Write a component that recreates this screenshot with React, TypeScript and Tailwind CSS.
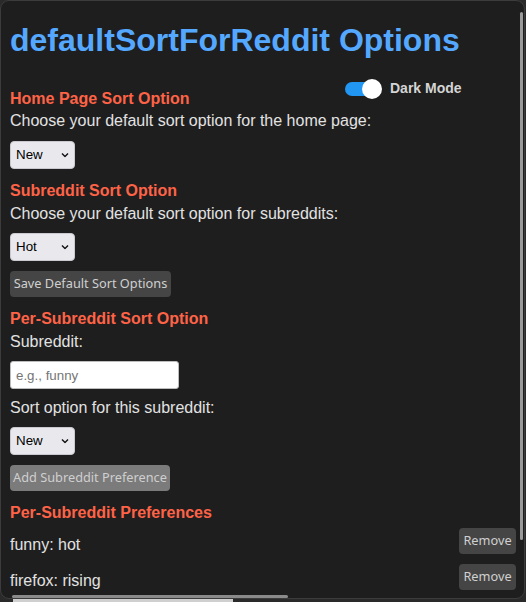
import React from "react";

const arial = { fontFamily: '"Liberation Sans", Arial, sans-serif' };

function Chevron() {
  return (
    <svg
      className="pointer-events-none absolute right-[6px] top-1/2 -translate-y-1/2"
      width="8"
      height="5"
      viewBox="0 0 8 5"
    >
      <path d="M1 1 L4 4 L7 1" fill="none" stroke="#111" strokeWidth="1.4" />
    </svg>
  );
}

function FakeSelect({ value }: { value: string }) {
  return (
    <div className="relative h-[28px] w-[65px]">
      <select
        defaultValue={value}
        className="h-[28px] w-[65px] appearance-none rounded-[4px] border border-[#c9c9cf] bg-[#e9e9ed] pl-[5px] text-[13.33px] text-black outline-none"
        style={arial}
      >
        <option>{value}</option>
      </select>
      <Chevron />
    </div>
  );
}

function H2({ children, mt }: { children: React.ReactNode; mt: string }) {
  return (
    <h2 className={`${mt} text-[16px] font-bold leading-[18px] text-[#ff6347]`}>{children}</h2>
  );
}

function P({ children, mt }: { children: React.ReactNode; mt: string }) {
  return <p className={`${mt} text-[16px] leading-[18px] text-[#e2e2e2]`}>{children}</p>;
}

const btnFont = { fontFamily: '"Noto Sans", "Open Sans", sans-serif' };

export default function App() {
  return (
    <div className="relative h-[602px] w-[526px] overflow-hidden bg-[#2a2a2a]" style={arial}>
      <div className="relative h-[599px] w-[525px] overflow-hidden rounded-[9px] border border-[#3c3c3c] bg-[#1e1e1e]">
        <div className="flex w-[515px] flex-col items-start pl-[9px] pt-[21px]">
          <h1 className="text-[32px] font-bold leading-[36px] text-[#55a8ff]">
            defaultSortForReddit Options
          </h1>

          <H2 mt="mt-[32px]">Home Page Sort Option</H2>
          <P mt="mt-[4px]">Choose your default sort option for the home page:</P>
          <div className="mt-[11px]">
            <FakeSelect value="New" />
          </div>

          <H2 mt="mt-[13px]">Subreddit Sort Option</H2>
          <P mt="mt-[5px]">Choose your default sort option for subreddits:</P>
          <div className="mt-[10px]">
            <FakeSelect value="Hot" />
          </div>
          <button
            className="mt-[10px] h-[26px] w-[161px] rounded-[4px] bg-[#454545] text-[12.75px] text-[#d0d0d0]"
            style={btnFont}
          >
            Save Default Sort Options
          </button>

          <H2 mt="mt-[13px]">Per-Subreddit Sort Option</H2>
          <P mt="mt-[5px]">Subreddit:</P>
          <input
            placeholder="e.g., funny"
            className="mt-[10px] h-[28px] w-[169px] rounded-[3px] border border-[#bdbdbd] bg-white pl-[5px] text-[13.33px] text-black outline-none placeholder:text-[#757575]"
            style={arial}
          />
          <P mt="mt-[10px]">Sort option for this subreddit:</P>
          <div className="mt-[10px]">
            <FakeSelect value="New" />
          </div>
          <button
            className="mt-[10px] h-[26px] w-[160px] rounded-[4px] bg-[#7b7b7b] text-[12.75px] text-[#cfcfcf]"
            style={btnFont}
          >
            Add Subreddit Preference
          </button>

          <H2 mt="mt-[13px]">Per-Subreddit Preferences</H2>
          <ul className="mt-[6px] flex w-full flex-col gap-[10px]">
            <li className="flex w-full items-start justify-between">
              <span className="mt-[8px] text-[16px] leading-[18px] text-[#e2e2e2]">funny: hot</span>
              <button
                className="h-[26px] w-[57px] rounded-[4px] bg-[#454545] text-[12.75px] text-[#d0d0d0]"
                style={btnFont}
              >
                Remove
              </button>
            </li>
            <li className="flex w-full items-start justify-between">
              <span className="mt-[8px] text-[16px] leading-[18px] text-[#e2e2e2]">firefox: rising</span>
              <button
                className="h-[26px] w-[57px] rounded-[4px] bg-[#454545] text-[12.75px] text-[#d0d0d0]"
                style={btnFont}
              >
                Remove
              </button>
            </li>
          </ul>
        </div>

        {/* Dark mode toggle (fixed overlay) */}
        <div className="absolute left-[344px] top-[77px] flex items-center gap-[7px]">
          <div className="relative h-[20px] w-[38px]">
            <div className="absolute left-0 top-[3px] h-[14px] w-[30px] rounded-full bg-[#2196f3]" />
            <div className="absolute left-[17px] top-0 h-[20px] w-[20px] rounded-full bg-white" />
          </div>
          <span className="text-[14px] font-bold text-[#d4d4d4]">Dark Mode</span>
        </div>

        {/* scrollbars */}
        <div className="absolute left-[519px] top-[11px] h-[528px] w-[3px] rounded-full bg-[#9a9a9a]" />
        <div className="absolute left-[11px] top-[594px] h-[3px] w-[276px] rounded-full bg-[#8a8a8a]" />
      </div>
      <div className="absolute left-[13px] top-[599px] h-[3px] w-[220px] bg-[#cfcfcf]" />
    </div>
  );
}
